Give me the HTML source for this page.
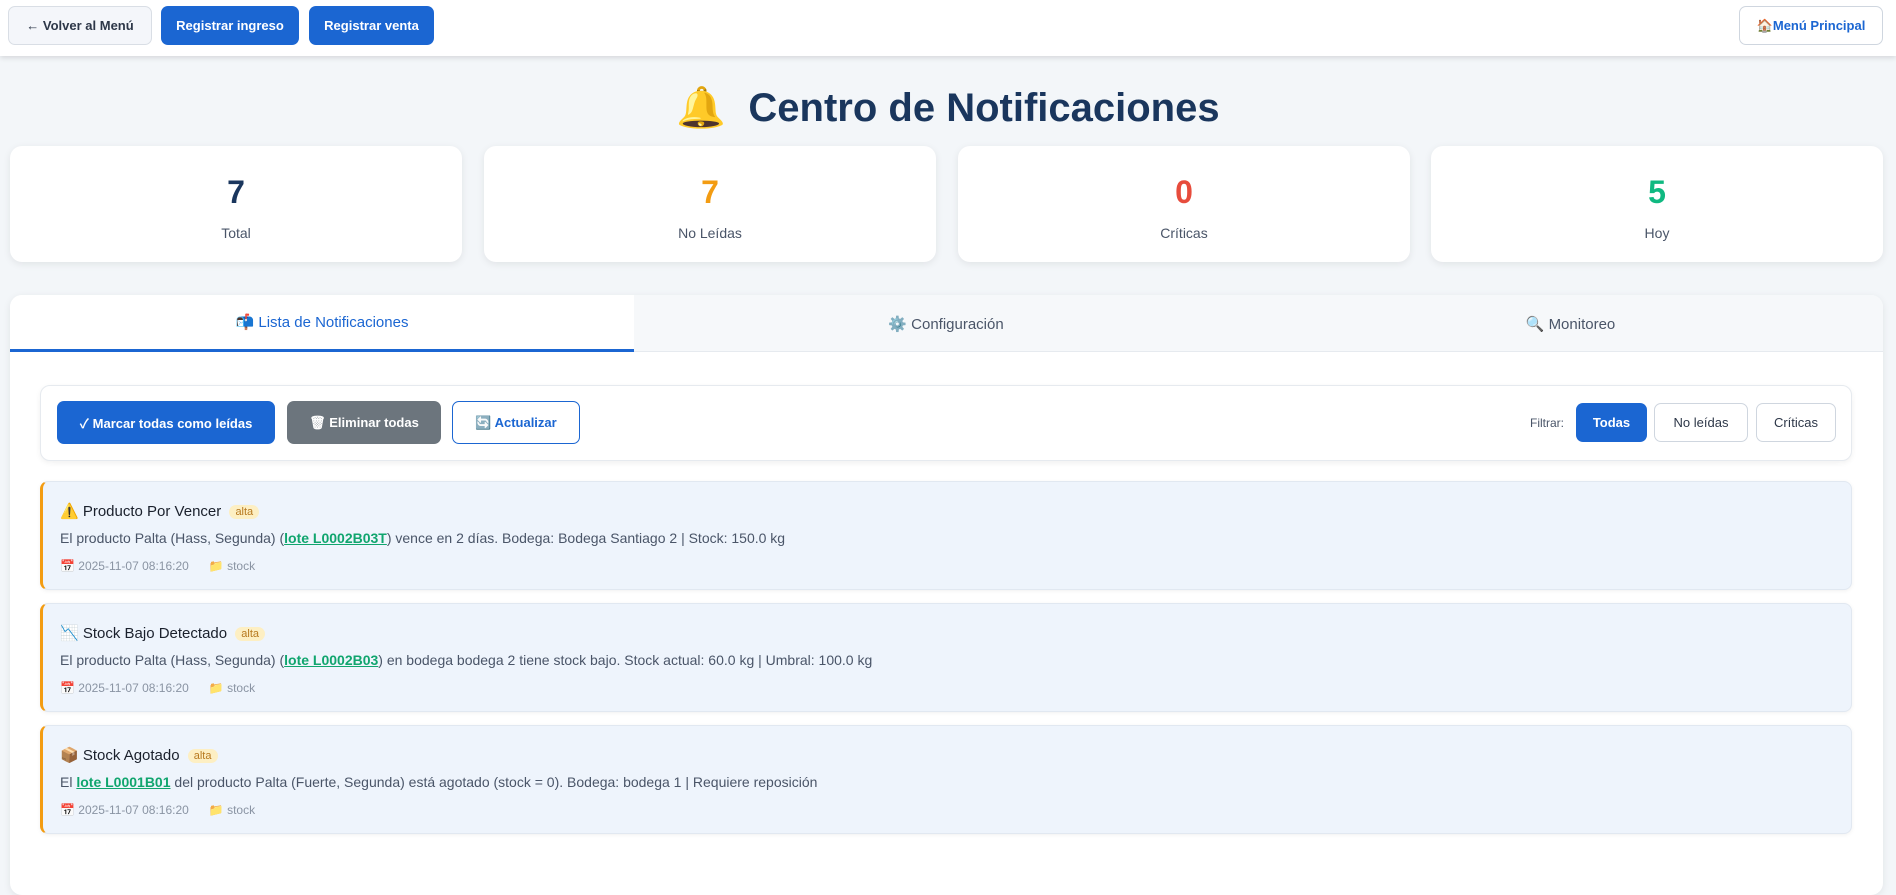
<!DOCTYPE html>
<html><head><meta charset="utf-8"><style>
*{box-sizing:border-box;margin:0;padding:0}
body{width:1896px;height:841px;overflow:hidden;background:#f3f6f9;font-family:"Liberation Sans","Noto Sans CJK JP",sans-serif;color:#2d3748;position:relative}
.hdr{position:absolute;left:0;top:0;width:1896px;height:56px;background:#fff;box-shadow:0 2px 5px rgba(0,0,0,.12)}
.b{position:absolute;display:flex;align-items:center;justify-content:center;font-size:13px;font-weight:bold;border-radius:7px}
.blue{background:#1b66d2;color:#fff}
.title{position:absolute;top:84px;left:0;width:1896px;text-align:center;font-size:40px;font-weight:bold;color:#1a365d}
.stat{position:absolute;top:146px;width:452px;height:116px;background:#fff;border-radius:12px;box-shadow:0 2px 8px rgba(0,0,0,.08);text-align:center}
.stat .n{position:absolute;top:28px;width:100%;font-size:32px;font-weight:bold}
.stat .l{position:absolute;top:79px;width:100%;font-size:14px;color:#4a5568}
.panel{position:absolute;left:10px;top:295px;width:1873px;height:600px;background:#fff;border-radius:12px;box-shadow:0 2px 8px rgba(0,0,0,.08);overflow:hidden}
.tabs{position:absolute;left:0;top:0;width:100%;height:57px;background:#f6f8fa;border-bottom:1px solid #e6eaef}
.tab{position:absolute;top:0;height:57px;display:flex;align-items:center;justify-content:center;font-size:15px;color:#4a5568}
.tool{position:absolute;left:30px;top:90px;width:1812px;height:76px;border:1px solid #e6eaef;border-radius:10px;box-shadow:0 2px 6px rgba(0,0,0,.06);background:#fff}
.card{position:absolute;left:30px;width:1812px;height:109px;background:#eef4fc;border:1px solid #e1e8f1;border-left:3px solid #f39c12;border-radius:8px;box-shadow:0 1px 4px rgba(0,0,0,.06)}
.card .t{position:absolute;left:17px;top:20px;font-size:15px;color:#1a202c}
.badge{display:inline-block;background:#fdefc3;color:#b7791f;font-size:11px;padding:1px 6px;border-radius:8px;margin-left:4px;vertical-align:1px}
.card .m{position:absolute;left:17px;top:48px;font-size:14px;color:#4a5568}
.card .m a{color:#10a56e;font-weight:bold;text-decoration:underline}
.card .d{position:absolute;left:17px;top:77px;font-size:12px;color:#8a94a3}
</style></head><body>
<div class="hdr">
<div class="b" style="left:8px;top:6px;width:144px;height:39px;background:#f4f6fa;border:1px solid #d9dee5;color:#2d3748">← Volver al Menú</div>
<div class="b blue" style="left:161px;top:6px;width:138px;height:39px">Registrar ingreso</div>
<div class="b blue" style="left:309px;top:6px;width:125px;height:39px">Registrar venta</div>
<div class="b" style="left:1739px;top:6px;width:144px;height:39px;background:#fff;border:1px solid #cfd6df;color:#1b66d2">🏠Menú Principal</div>
</div>
<div class="title">🔔&nbsp; Centro de Notificaciones</div>
<div class="stat" style="left:10px"><div class="n" style="color:#1a365d">7</div><div class="l">Total</div></div>
<div class="stat" style="left:484px"><div class="n" style="color:#f39c12">7</div><div class="l">No Leídas</div></div>
<div class="stat" style="left:958px"><div class="n" style="color:#e74c3c">0</div><div class="l">Críticas</div></div>
<div class="stat" style="left:1431px"><div class="n" style="color:#10b981">5</div><div class="l">Hoy</div></div>
<div class="panel">
<div class="tabs">
<div class="tab" style="left:0;width:624px;background:#fff;color:#1b66d2;border-bottom:3px solid #1b66d2">📬 Lista de Notificaciones</div>
<div class="tab" style="left:624px;width:624px">⚙️ Configuración</div>
<div class="tab" style="left:1248px;width:625px">🔍 Monitoreo</div>
</div>
<div class="tool">
<div class="b blue" style="left:16px;top:15px;width:218px;height:43px">✓ Marcar todas como leídas</div>
<div class="b" style="left:246px;top:15px;width:154px;height:43px;background:#6c757d;color:#fff">🗑 Eliminar todas</div>
<div class="b" style="left:411px;top:15px;width:128px;height:43px;border:1px solid #1b66d2;color:#1b66d2;background:#fff">🔄 Actualizar</div>
<div style="position:absolute;left:1489px;top:30px;font-size:12px;color:#4a5568">Filtrar:</div>
<div class="b blue" style="left:1535px;top:17px;width:71px;height:39px">Todas</div>
<div class="b" style="left:1613px;top:17px;width:94px;height:39px;border:1px solid #cfd6df;color:#2d3748;font-weight:normal">No leídas</div>
<div class="b" style="left:1715px;top:17px;width:80px;height:39px;border:1px solid #cfd6df;color:#2d3748;font-weight:normal">Críticas</div>
</div>
<div class="card" style="top:186px"><div class="t">⚠️ Producto Por Vencer <span class="badge">alta</span></div><div class="m">El producto Palta (Hass, Segunda) (<a>lote L0002B03T</a>) vence en 2 días. Bodega: Bodega Santiago 2 | Stock: 150.0 kg</div><div class="d">📅 2025-11-07 08:16:20 &nbsp;&nbsp;&nbsp;&nbsp; 📁 stock</div></div>
<div class="card" style="top:308px"><div class="t">📉 Stock Bajo Detectado <span class="badge">alta</span></div><div class="m">El producto Palta (Hass, Segunda) (<a>lote L0002B03</a>) en bodega bodega 2 tiene stock bajo. Stock actual: 60.0 kg | Umbral: 100.0 kg</div><div class="d">📅 2025-11-07 08:16:20 &nbsp;&nbsp;&nbsp;&nbsp; 📁 stock</div></div>
<div class="card" style="top:430px"><div class="t">📦 Stock Agotado <span class="badge">alta</span></div><div class="m">El <a>lote L0001B01</a> del producto Palta (Fuerte, Segunda) está agotado (stock = 0). Bodega: bodega 1 | Requiere reposición</div><div class="d">📅 2025-11-07 08:16:20 &nbsp;&nbsp;&nbsp;&nbsp; 📁 stock</div></div>
</div>
</body></html>
